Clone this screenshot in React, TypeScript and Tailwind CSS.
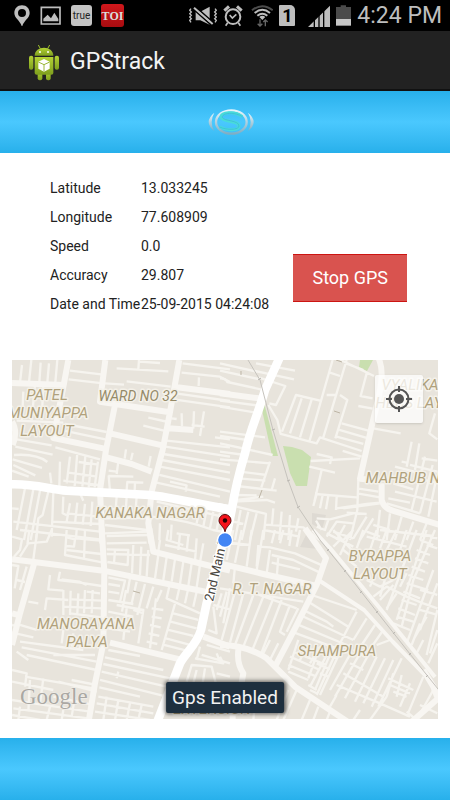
import { useState } from 'react';

const readings = [
  { label: 'Latitude', value: '13.033245' },
  { label: 'Longitude', value: '77.608909' },
  { label: 'Speed', value: '0.0' },
  { label: 'Accuracy', value: '29.807' },
  { label: 'Date and Time', value: '25-09-2015 04:24:08' }
];

const places = [
  { name: 'PATEL', x: 47, y: 400 },
  { name: 'MUNIYAPPA', x: 48, y: 418 },
  { name: 'LAYOUT', x: 47, y: 436 },
  { name: 'KANAKA NAGAR', x: 150, y: 518 },
  { name: 'VYALIKA', x: 410, y: 390 },
  { name: 'HBCS LAY', x: 409, y: 408 },
  { name: 'MAHBUB N', x: 403, y: 483 },
  { name: 'BYRAPPA', x: 380, y: 561 },
  { name: 'LAYOUT', x: 380, y: 579 },
  { name: 'R. T. NAGAR', x: 272, y: 594 },
  { name: 'MANORAYANA', x: 86, y: 629 },
  { name: 'PALYA', x: 87, y: 647 },
  { name: 'SHAMPURA', x: 337, y: 656 },
  { name: 'EXTENSION', x: 212, y: 714 }
];

// Each tile has its own origin, three units to a pixel
const tiles = [
  {
    x: 0,
    y: 350,
    main: 'M30 403C100 400 150 418 200 422L450 435C520 442 600 465 700 480',
    streets:
      'M316 30L300 155L510 187M345 165L318 300L300 420L307 580M538 30L510 187L488 300L455 425L445 520L454 580M205 30L192 100L160 264L310 295M330 250L490 287M320 322L395 342L455 365M520 110L690 132M505 235L580 240M36 215Q54 245 38 285M36 99L190 105',
    lanes:
      'M66 45L60 98M94 30L87 98M122 38L118 98M147 40L142 98M172 30L166 98M210 62L310 74M206 88L310 100M417 30L415 58M350 55L505 64M418 35L480 39M380 94L512 110M315 100L372 104M548 40L690 58M545 68L660 80L690 96M597 82L596 108M527 130L690 153M520 148L690 172M545 190L546 228M582 184L580 236M612 184L600 258M575 225L614 230M430 227L495 243M445 203L505 216M514 205L530 207M645 262L690 268M500 272L690 292M496 290L690 320M490 312L690 345M485 330L690 368M480 350L690 390M478 375L690 425M470 398L660 440M510 395L560 406M560 404L557 425M195 222L320 246M192 242L316 268M166 292L300 328M50 212L190 218M70 125L66 210M105 105L95 210M130 108L125 210M50 268L155 286M46 290L158 314M42 315Q110 310 142 336M38 328L126 354M40 345L106 376M36 362L86 380M150 368L154 400M180 335L178 410M210 320L200 400M232 308L224 408M256 320L247 410M275 328L266 412M294 335L284 412M205 368L292 380M236 336L290 343M190 392L295 405M378 298L374 326M398 308L393 330M452 318L446 350M326 376L330 425M325 378L400 380M355 335L350 372M380 420L382 396L430 398M405 398L404 425M326 362L350 365M75 415L50 540M100 418L72 570M120 422L92 570M145 425L128 495L115 505L108 570M160 428L155 560M36 475L56 477M40 515L300 545M60 540L300 568M190 440L188 490L200 496M210 460L200 515M232 458L225 520M255 462L248 525M277 455L272 528M200 490L298 500M155 515L300 522M240 430L250 452M315 475L380 480M315 505L442 503M315 525L442 540M315 550L445 545M350 440L345 505M380 440L376 505M410 440L405 505M455 500Q560 510 640 540L690 550M470 455L690 505M480 520L478 570M515 524L512 570M600 470L590 520M620 478L610 530M640 485L630 535M660 488L650 540M530 550L570 556'
  },
  {
    x: 220,
    y: 350,
    main: 'M178 25L135 120C112 200 90 240 75 310C60 360 45 420 35 480L15 580M-5 472L35 480',
    streets:
      'M0 130L118 145M476 25C500 80 470 160 457 220L420 386L438 388M485 400V450Q490 474 520 483L660 525',
    lanes:
      'M0 40L110 65M0 62L120 88M0 85Q18 85 22 96L122 118M108 40L225 62M100 62L222 88M115 82L196 108L168 165L148 160M0 152L110 166M0 170L108 188M145 165L172 210L182 252L290 280L300 262L425 303M0 245L135 262M0 258L95 272M0 280L158 315M0 305L75 315M0 328L150 340M60 365L140 375M55 385L136 392M50 408L170 422M46 435L110 436M150 335L124 412M165 385L155 420M130 440L50 450M38 455L140 450L165 458M186 245L228 135L300 152M210 250L245 145M240 262L275 148M268 275L338 30M310 262L380 30M330 68L360 78M360 135L382 150L346 265M346 135L320 135M362 30L462 78M378 40L430 60M440 70L422 138L458 145M415 168L458 176M460 235L542 250M365 220L445 242M358 240L440 264M350 260L430 282M368 303L425 320M290 312L335 322L330 342M272 333L420 325M268 350L345 368M305 360L283 455M285 432L410 442M290 432L280 468M308 435L300 475M325 437L318 478M350 440L348 480M415 390L412 480L390 570M350 475L440 462L480 458M412 430L480 442M412 415L475 425M370 475L480 460M380 488L440 492M290 505L330 508L400 490M290 530L315 540L325 510M288 512L305 540M320 560L350 515L400 520M350 570L375 525M340 545L400 565M400 565L440 500M420 570L460 505M440 545L480 560M460 525L510 540M480 480L470 570M510 490L500 570M545 500L525 570M580 515L560 570M620 520L600 570M480 540L640 558M575 275L560 350M598 280L585 360M525 350L620 375M615 320L575 480M545 335L560 338M638 345L600 490M570 345L652 365M585 385L652 398M520 400L580 418M525 425L650 455M505 445L570 458M645 190L628 250L652 268M648 390L625 500M500 460L600 490M605 325L652 332M50 470L138 492L130 570M62 480L45 570M85 485L65 570M110 490L90 570M40 515L70 522M138 524L250 532L300 570M160 475L156 525M185 485L178 570M210 495L205 570M235 505L228 545M130 540L240 560'
  },
  {
    x: 0,
    y: 530,
    main: 'M682 -10L662 60L620 220L603 300C592 342 555 370 540 400L470 580',
    streets:
      'M305 -5L313 125L310 340L285 460L265 580M36 88L310 122L620 186M104 95L60 250L36 345M448 -5L460 65L620 105L690 122M330 338L540 388M36 250L60 256M610 320L690 350',
    lanes:
      'M36 20L66 28L60 60L42 80M88 0L82 45L60 80M112 0L100 88M155 0L140 35L85 40M200 0L195 75L310 98M200 22L225 28L222 50L200 48M230 0L228 25L300 32M255 0L252 90M200 60L304 72M320 18L445 15M320 40L440 38M320 58L385 60L383 105L322 96M345 60L342 100M400 45L396 130M424 50L420 135M445 60L440 140M320 72L450 75M475 75L465 145M500 82L490 150M525 88L515 155M550 95L540 162M575 100L565 168M600 105L590 172M480 30L475 65M505 0L500 30L550 45M540 10L535 60M565 18L560 65M590 25L585 95M610 40L600 98M495 45L590 65M36 105L55 108L44 175M80 110L60 180M50 150L75 156M85 215L115 220M150 135L145 178L190 182M180 125L175 150L240 158L305 168M185 148L238 155L260 165M135 240L140 205L205 210M190 180L190 255M212 182L210 255M235 190L232 250M255 180L252 250M278 180L275 250M215 208L305 212M190 230L305 235M260 185L300 190M210 250L305 262M325 142L375 152L360 215M325 162L360 168M325 185L358 190M325 210L400 222M390 145L382 190M378 180L366 245M410 155L395 220M435 162L412 255M460 170L440 235M485 180L470 215M350 225L430 240L415 340M380 235L370 330M430 250L400 240M325 245L400 260M325 268L395 280M325 295L390 305M468 205L450 355M510 160L500 205L600 250M540 165L530 210M565 175L555 220M590 185L580 230M455 235L490 240M455 260L485 265M450 285L482 292M446 310L478 318M440 335L472 342M525 222L485 360M520 250L595 270M512 275L590 295M505 300L580 318M498 325L570 345M492 345L560 362M36 285L55 290M60 285L110 300M36 308L100 322M60 335L250 360M190 300L185 340M220 310L215 350M245 320L238 362M65 352L290 395M80 375L290 420M50 365L85 390M160 375L285 375M325 360L420 378M315 382L490 420M310 402L510 445M305 425L500 470M355 425L350 445M215 450L290 465M175 455L290 485M300 450L500 500M298 472L420 500M295 500L460 530M36 420L80 430L75 470M75 440L280 475M36 455L160 480M90 450L85 545M130 445L120 520M160 500L280 525M100 520L270 545M36 510L100 520M40 535L270 566M60 530L55 570M150 530L140 570M190 540L185 570M225 500L215 560M36 555L120 570M290 520L460 550M320 500L310 570M355 510L345 570M390 520L380 570M425 525L415 570M285 545L450 570M640 180L632 220M665 190L650 240M640 225L690 238M690 175L670 280M625 300L650 310L640 230M605 375L690 400M620 345L690 365M585 385L670 400L660 380M600 350L590 390M650 370L660 395M560 455L575 405L635 410L650 470M590 420L580 460M615 415L608 460M650 430L690 440'
  },
  {
    x: 220,
    y: 530,
    main: '',
    streets:
      'M0 100L130 132L290 168M255 -5L318 85L290 165L225 295L165 410M0 345Q80 345 140 385L225 470L390 580M55 360Q50 400 70 430L62 475M38 515V570M610 420L640 470L655 510M660 500L570 580',
    lanes:
      'M40 0L20 90M65 0L45 98M0 35L90 45M95 0L80 110M130 0L110 120M165 0L155 40M190 0L180 40M215 0L208 48M240 0L230 50M115 50L150 52L225 70L315 110M155 75L220 90L300 128M155 98L240 118M115 45L110 110M150 60L140 130M175 80L170 145M45 110L40 160M0 175L60 185L250 215M20 185L0 260M45 185L5 330M70 190L30 338M100 195L45 345M130 200L70 350M160 205L95 365M185 210L120 380M210 225L180 305L195 315M235 235L200 305M90 185L230 235M130 370L150 330M150 390L175 340M240 255L400 330M225 280L380 345M215 305L350 355M265 215L385 290M275 195L410 240M250 240L320 275L340 290M235 330L205 420M265 340L240 390M300 350L270 400M210 380L300 420M205 405L290 440M205 425L265 450M220 365L320 405M290 375L265 445M320 375L270 470M340 350L285 480M370 345L300 495M265 465L290 480M270 480L295 492M300 430L325 440M290 400L330 418M310 370L350 385M410 245L365 330L290 495M440 265L400 330M465 285L415 360M490 300L445 365M510 330L470 345M395 365L330 480M420 370L345 500M445 375L375 505M470 380L405 515M495 385L430 520M520 390L455 530M545 385L475 530M370 430L490 500M390 400L430 420M350 465L480 520M400 360L435 380M505 445L580 480M520 430L500 500M545 435L530 500M510 465L570 490M520 485L560 500M570 460L540 530M610 440L560 560M640 480L590 570M480 520L570 560M500 500L450 570M420 540L400 570M350 495L330 530M230 480L190 570M270 510L245 570M205 480L170 570M295 530L280 570M330 545L320 570M185 460L155 500M110 470L100 570M340 0L395 60M360 30L340 50M390 10L360 75M320 10L400 50M400 0L370 30M430 0L410 55M395 80L370 60M410 110L385 90M470 0L450 60M500 0L480 55M530 0L500 60M440 20L560 50M560 0L540 60M590 0L500 240M620 0L530 270M645 0L580 150L545 290M600 30L640 45M590 60L630 75M585 85L625 100M575 110L615 125M565 135L610 150M560 160L625 180M550 185L600 205M545 210L590 225M535 235L585 255M530 260L580 275M520 280L570 300M460 200L500 170L560 200L610 220L652 235M440 150L480 170L520 150M430 130L410 150M480 210L520 165M500 235L530 190M540 170L560 130M470 120L450 170M500 130L480 200M640 120L560 340M652 160L600 300M620 260L580 330M652 240L620 375M600 240L652 255M652 300L630 370M575 345L600 280M590 370L610 330M625 400L652 340M600 525L652 550M560 545L590 570M630 20L652 25M620 45L652 55M600 180L652 195'
  }
];

const StatusBar = () => (
  <div className="flex h-[31px] items-center gap-[9px] bg-black pr-2 pl-3.5 text-[#bebebe]">
    <svg className="h-6 w-[17px]" viewBox="0 0 51 72" fill="currentColor">
      <path fillRule="evenodd" d="M24 4C10 4 1 14 1 27C1 42 18 50 23 66H25C30 50 47 42 47 27C47 14 38 4 24 4ZM24 15A12 12 0 1 1 24 39A12 12 0 1 1 24 15Z" />
    </svg>
    <svg className="h-6 w-[22px]" viewBox="0 0 66 72" fill="none">
      <path d="M4 10H60V60H4Z" stroke="currentColor" strokeWidth="5" />
      <path d="M10 52V44L23 32L33 43L43 26L55 45V52Z" fill="currentColor" />
    </svg>
    <span className="flex h-[21px] w-[21px] items-center justify-center rounded-[3px] bg-[#c4c4c4] text-[10px] text-[#222]">true</span>
    <span className="flex h-[23px] w-[23px] items-center justify-center rounded-[3px] bg-linear-to-b from-[#d0181c] to-[#a80c10] font-['Liberation_Serif',serif] text-xs font-bold text-[#dcdcdc]">
      TOI
    </span>
    <div className="ml-auto flex items-center gap-1.5">
      <svg className="h-6 w-7" viewBox="0 0 84 72" fill="none" stroke="currentColor">
        <path d="M6 14L2 19L7 24L2 29L7 34L2 39L7 44L2 49L6 55M78 14L82 19L77 24L82 29L77 34L82 39L77 44L82 49L78 55" strokeWidth="4" />
        <path d="M20 23H34L62 8V62L34 49H20Z" fill="currentColor" stroke="none" />
        <path d="M14 16L68 64" stroke="#000" strokeWidth="5" />
        <path d="M19 8L73 56" stroke="#000" strokeWidth="5" />
        <path d="M15 11L71 60" strokeWidth="6" />
      </svg>
      <svg className="h-6 w-5" viewBox="0 0 60 72" fill="none" stroke="currentColor">
        <circle cx="30" cy="38" r="22" strokeWidth="6" />
        <path d="M4 20L18 7M56 20L42 7" strokeWidth="9" />
        <path d="M20 33L28 42L40 31M14 56L8 65M46 56L52 65" strokeWidth="5" />
      </svg>
      <svg className="h-6 w-6" viewBox="0 0 72 72" fill="none" stroke="currentColor">
        <path d="M9 19Q40 -6 71 19" stroke="#4c4c4c" strokeWidth="6" />
        <path d="M17 27Q40 8 63 27M25 35Q40 23 55 35" strokeWidth="6" />
        <path d="M40 48L31 39Q40 32 49 39Z" fill="currentColor" stroke="none" />
        <path d="M33 46V66M26 59L33 66L40 59M49 67V48M43 54L49 48L56 54" stroke="#666" strokeWidth="4" />
      </svg>
      <span className="flex h-[21px] w-4 items-center justify-center rounded-[1px] rounded-tr-[5px] bg-[#bebebe] text-lg leading-none font-bold text-black">1</span>
      <svg className="h-6 w-[29px]" viewBox="0 0 87 72" fill="currentColor">
        <path d="M21 69L87 5V69Z" />
        <path d="M40 40V70M54 30V70M68 10V70" stroke="#000" strokeWidth="4" />
      </svg>
      <svg className="h-6 w-[15px]" viewBox="0 0 45 72">
        <path d="M14 4H30V9H45V46H0V9H14Z" fill="#4b4b4b" />
        <path d="M0 45H45V65H0Z" fill="#c6c6c6" />
      </svg>
      <span className="text-[23px] leading-none">4:24 PM</span>
    </div>
  </div>
);

const AndroidIcon = () => (
  <svg className="h-[37px] w-8" viewBox="0 0 96 111">
    <defs>
      <linearGradient id="droid" x1="0" y1="0" x2="0" y2="1">
        <stop offset="0" stopColor="#b4d335" />
        <stop offset="1" stopColor="#7e9f1e" />
      </linearGradient>
    </defs>
    <path d="M31 3L37 14M65 3L59 14" stroke="#9fc02c" strokeWidth="3" />
    <path d="M20 35C20 3 76 3 76 35Z" fill="url(#droid)" />
    <g fill="url(#droid)">
      <rect x="3" y="35" width="13" height="42" rx="6" />
      <rect x="80" y="35" width="13" height="42" rx="6" />
      <rect x="29" y="80" width="14" height="29" rx="6" />
      <rect x="54" y="80" width="14" height="29" rx="6" />
      <path d="M20 39H76V87Q76 92 70 92H26Q20 92 20 87Z" />
    </g>
    <circle cx="36" cy="24" r="3" fill="#fff" />
    <circle cx="60" cy="24" r="3" fill="#fff" />
    <path d="M48 45L65 53V74L48 83L31 74V53Z" fill="#fff" />
    <path d="M31 54L48 62L65 54M48 62V82" fill="none" stroke="#9ab83a" strokeWidth="3" />
  </svg>
);

const Logo = () => (
  <svg className="h-7 w-12" viewBox="0 0 144 84" fill="none">
    <defs>
      <linearGradient id="silver" x1="0" y1="0" x2="0" y2="1">
        <stop offset="0" stopColor="#e6f5fc" />
        <stop offset="1" stopColor="#7faec4" />
      </linearGradient>
    </defs>
    <ellipse cx="73" cy="42" rx="46" ry="35" stroke="url(#silver)" strokeWidth="7" />
    <path d="M22 14Q-12 42 22 69Q6 42 22 14ZM123 14Q157 42 123 69Q139 42 123 14Z" fill="url(#silver)" />
    <path d="M106 26C84 8 40 12 42 28C46 43 96 36 96 54C96 68 60 69 38 57" stroke="#48dcd9" strokeWidth="9" />
    <path d="M106 26C84 11 44 14 46 28C50 40 96 36 96 54C96 66 60 67 38 57" stroke="#3cb2d8" strokeWidth="2" />
  </svg>
);

const StreetMap = () => (
  <svg className="absolute inset-0 h-full w-full bg-[#e8e4dc]" viewBox="12 360 426 359" preserveAspectRatio="xMidYMid slice">
    <g fill="#c9dfaf">
      <path d="M360 360H373L367 371L359 367Z" />
      <path d="M263 399L278 456H272L262 410Z" />
      <path d="M283 446L292 447L302 450L311 457L307 486H296L290 473Z" />
    </g>
    <path d="M312 513L326 515L322 530L312 524ZM307 533L318 549L300 547Z" fill="#dedad3" />
    <g fill="none" strokeLinejoin="round">
      {tiles.map((tile, index) => (
        <path key={index} d={tile.lanes} transform={`translate(${tile.x} ${tile.y}) scale(0.3333)`} stroke="#f6f4ef" strokeWidth="7" />
      ))}
      <path d="M313 530L330 548L378 606L435 677M320 581L364 610L393 642L425 675" stroke="#f8f6f2" strokeWidth="4" />
      {tiles.map((tile, index) => (
        <path key={index} d={tile.streets} transform={`translate(${tile.x} ${tile.y}) scale(0.3333)`} stroke="#f8f6f2" strokeWidth="18" />
      ))}
      {tiles.map((tile, index) => (
        <path key={index} d={tile.main} transform={`translate(${tile.x} ${tile.y}) scale(0.3333)`} stroke="#ffffff" strokeWidth="26" />
      ))}
      <path d="M248 360L260 380L273 430L288 480L298 507L320 540L345 571L377 612L410 654L438 689" stroke="#c6c3bd" />
      <path d="M258 380L261 378M272 430L275 429M287 481L290 480M297 508L300 506M327 551L329 549M344 572L346 570M360 593L362 591M376 613L378 611M393 634L395 632M409 655L411 653M426 677L428 675" stroke="#bbb8b2" />
      <path d="M241 371V375M259 498L262 490M334 411L340 413M133 591L140 593M336 360L342 362" stroke="#bdb5a5" />
    </g>
    <g
      className="font-[Roboto,sans-serif] text-[15px] italic"
      fill="#b0a17c"
      stroke="#f4f1e9"
      strokeWidth="3"
      strokeLinejoin="round"
      paintOrder="stroke"
      textAnchor="middle"
    >
      {places.map((place) => (
        <text key={`${place.name}${place.x}`} x={place.x} y={place.y}>
          {place.name}
        </text>
      ))}
      <text className="text-sm" x="138" y="401" fill="#958a68">
        WARD NO 32
      </text>
    </g>
    <text
      className="font-[Roboto,sans-serif] text-[13px]"
      transform="translate(213 602) rotate(-77)"
      fill="#4a4640"
      stroke="#fff"
      strokeWidth="2"
      paintOrder="stroke"
    >
      2nd Main R
    </text>
    <path d="M225 532C224 526 219 525 219 520.500A6 6 0 0 1 231 520.500C231 525 226 526 225 532Z" fill="#f5131b" stroke="#5b0c0e" />
    <circle cx="225" cy="520.500" r="2.200" fill="#200" />
    <circle cx="225" cy="540" r="7.500" fill="#4285f4" stroke="#fff" strokeWidth="1.300" />
    <text
      className="font-['Liberation_Serif',serif] text-[23px]"
      x="20"
      y="704"
      fill="#aaa8a3"
      stroke="#f3f1ec"
      strokeWidth="1"
      paintOrder="stroke"
    >
      Google
    </text>
  </svg>
);

const App = () => {
  const [tracking, setTracking] = useState(true);

  return (
    <div className="flex min-h-screen flex-col bg-white font-[Roboto,sans-serif]">
      <StatusBar />
      <header className="flex h-[60px] items-center gap-2.5 border-b-2 border-[#111] bg-[#222] pt-1 pl-7">
        <AndroidIcon />
        <h1 className="text-[23px] text-[#f3f3f3]">GPStrack</h1>
      </header>
      <div className="flex h-[62px] items-center justify-center bg-linear-to-b from-[#27b0eb] via-[#4ac8fe] to-[#27b0eb] pl-3">
        <Logo />
      </div>

      <main className="flex flex-1 flex-col">
        <section className="flex justify-between pt-5 pr-[43px] pb-[42px] pl-[50px]">
          <table className="text-sm text-[#222]">
            <tbody>
              {readings.map((reading) => (
                <tr key={reading.label} className="h-[29px]">
                  <th scope="row" className="w-[91px] p-0 text-left font-normal whitespace-nowrap">
                    {reading.label}
                  </th>
                  <td className="p-0 whitespace-nowrap">{reading.value}</td>
                </tr>
              ))}
            </tbody>
          </table>
          <button
            type="button"
            className="mb-4 h-12 shrink-0 self-end border-y border-[#cc1512] bg-[#d9534f] px-[19px] text-lg text-white"
            onClick={() => setTracking(!tracking)}
          >
            {tracking ? 'Stop GPS' : 'Start GPS'}
          </button>
        </section>

        <section className="relative mx-3 mb-[19px] flex-1 overflow-hidden">
          <StreetMap />
          <button
            type="button"
            aria-label="My location"
            className="absolute top-[15px] right-[15px] flex h-12 w-12 items-center justify-center rounded-xs bg-white/75 shadow"
          >
            <svg className="h-7 w-7" viewBox="0 0 28 28" fill="none" stroke="#555" strokeWidth="2">
              <circle cx="14" cy="14" r="9.500" />
              <path d="M14 1V7M14 21V27M1 14H7M21 14H27" />
              <circle cx="14" cy="14" r="5" fill="#555" stroke="none" />
            </svg>
          </button>
          {tracking && (
            <div
              role="status"
              className="absolute bottom-1.5 left-1/2 -translate-x-1/2 rounded-xs bg-[#1e2f3e] px-1.5 text-[19px] leading-[31px] whitespace-nowrap text-[#f2f2f2] shadow-[0_0_4px_1px_rgba(0,0,0,0.6)]"
            >
              Gps Enabled
            </div>
          )}
        </section>
      </main>

      <footer className="h-[62px] bg-linear-to-b from-[#27b0eb] via-[#4ac8fe] to-[#27b0eb]" />
    </div>
  );
};

export default App;
